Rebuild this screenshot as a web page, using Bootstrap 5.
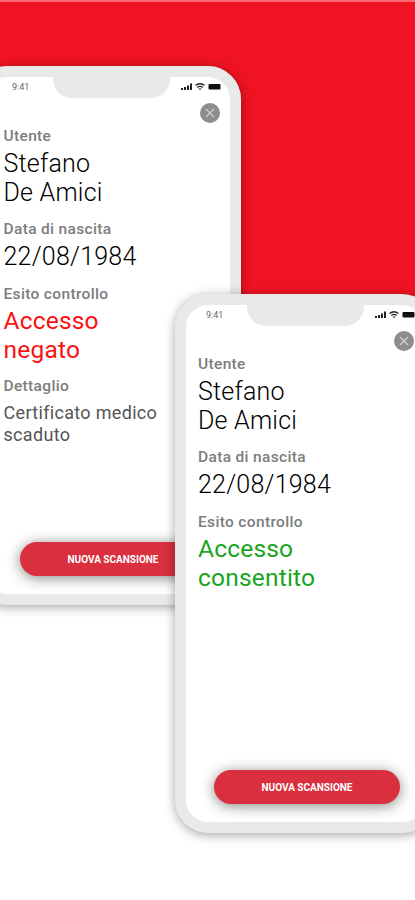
<!DOCTYPE html>
<html lang="it">
<head>
<meta charset="utf-8">
<meta name="viewport" content="width=device-width, initial-scale=1">
<title>Controllo accessi</title>
<link href="https://cdn.jsdelivr.net/npm/bootstrap@5.3.0/dist/css/bootstrap.min.css" rel="stylesheet">
<style>
body{font-family:Roboto,"Liberation Sans",sans-serif}
.stage{height:900px}
.banner{height:308px;background:#f01323;border-top:2px solid #fb6a73}
/* the two phones overlap on a free canvas */
.phone{width:260px;height:539px;background:#e9e9e9;border:11px solid #e9e9e9;border-radius:33px;box-shadow:0 2px 11px rgba(0,0,0,.36)}
.phone-back{left:-26px;top:66px;width:267px}
.phone-back .screen{padding-left:7px}
.phone-front{left:175px;top:294px}
.screen{border-radius:22px}
.statusbar{height:21px}
.clock{font-size:9px;line-height:11px;width:60px;padding:5px 0 0 20px;color:#666}
.notch{width:117px;background:#e9e9e9;border-radius:0 0 19px 19px}
.signals{width:60px;padding:6px 9px 0 0}
.closer{width:20px;height:20px;background:#8d8d8d;margin:5px 10px 0 0}
.info{padding-left:11.500px;margin-top:4px}
.phone-front .info{padding-left:12px}
.tag{font-size:15.500px;line-height:18px;font-weight:500;color:#7d7d7d;letter-spacing:.34px}
.val{font-size:25px;line-height:28.800px;font-weight:300;color:#000;letter-spacing:.22px;margin:5px 0 12.500px}
.val.one-line{margin:5px 0 13px}
.val.denied,.val.granted{font-weight:400;font-size:24.500px;letter-spacing:.2px;margin:4px 0 12.500px}
.denied{color:#fa1212}
.granted{color:#19a51d}
.note{font-size:18px;line-height:22px;color:#555;letter-spacing:.32px;margin-top:7px}
.scan{width:186px;height:34px;margin:0 0 18px 28px;background:#d92f3e;color:#fff;font-size:10px;font-weight:700;box-shadow:0 2px 14px rgba(0,0,0,.48)}
</style>
</head>
<body class="bg-white overflow-hidden">
<main class="stage position-relative overflow-hidden">
  <div class="banner"></div>

  <section class="phone phone-back position-absolute">
    <div class="screen bg-white h-100 d-flex flex-column">
      <div class="statusbar d-flex justify-content-between">
        <div class="clock">9:41</div><div class="notch"></div>
        <div class="signals d-flex justify-content-end">
          <svg width="40" height="8" viewBox="0 0 40 8"><path d="M0 5h2v2H0zM3 4h2v3H3zM6 2.500h2v4.500H6zM9 .5h2v6.500H9z" fill="#222"/><path d="M14.500 2.500q4.500-3.500 9 0M16.300 4.400q2.700-2 5.400 0" fill="none" stroke="#222" stroke-width="1.300"/><path d="M17.500 5.500h3L19 7.200z" fill="#222"/><rect x="27.500" y="1" width="12" height="5.500" rx="1" fill="#111"/></svg>
        </div>
      </div>
      <div class="closer rounded-circle align-self-end d-flex align-items-center justify-content-center"><svg width="10" height="10" viewBox="0 0 10 10"><path d="M1 1l8 8M9 1L1 9" stroke="#d0d0d0" stroke-width="1.200"/></svg></div>
      <div class="info flex-grow-1">
        <div class="tag">Utente</div>
        <div class="val">Stefano<br>De Amici</div>
        <div class="tag">Data di nascita</div>
        <div class="val one-line">22/08/1984</div>
        <div class="tag">Esito controllo</div>
        <div class="val denied">Accesso<br>negato</div>
        <div class="tag">Dettaglio</div>
        <div class="note">Certificato medico<br>scaduto</div>
      </div>
      <button class="scan btn rounded-pill border-0 p-0" type="button">NUOVA SCANSIONE</button>
    </div>
  </section>

  <section class="phone phone-front position-absolute">
    <div class="screen bg-white h-100 d-flex flex-column">
      <div class="statusbar d-flex justify-content-between">
        <div class="clock">9:41</div><div class="notch"></div>
        <div class="signals d-flex justify-content-end">
          <svg width="40" height="8" viewBox="0 0 40 8"><path d="M0 5h2v2H0zM3 4h2v3H3zM6 2.500h2v4.500H6zM9 .5h2v6.500H9z" fill="#222"/><path d="M14.500 2.500q4.500-3.500 9 0M16.300 4.400q2.700-2 5.400 0" fill="none" stroke="#222" stroke-width="1.300"/><path d="M17.500 5.500h3L19 7.200z" fill="#222"/><rect x="27.500" y="1" width="12" height="5.500" rx="1" fill="#111"/></svg>
        </div>
      </div>
      <div class="closer rounded-circle align-self-end d-flex align-items-center justify-content-center"><svg width="10" height="10" viewBox="0 0 10 10"><path d="M1 1l8 8M9 1L1 9" stroke="#d0d0d0" stroke-width="1.200"/></svg></div>
      <div class="info flex-grow-1">
        <div class="tag">Utente</div>
        <div class="val">Stefano<br>De Amici</div>
        <div class="tag">Data di nascita</div>
        <div class="val one-line">22/08/1984</div>
        <div class="tag">Esito controllo</div>
        <div class="val granted">Accesso<br>consentito</div>
      </div>
      <button class="scan btn rounded-pill border-0 p-0" type="button">NUOVA SCANSIONE</button>
    </div>
  </section>
</main>
<script src="https://cdn.jsdelivr.net/npm/bootstrap@5.3.0/dist/js/bootstrap.bundle.min.js"></script>
</body>
</html>
